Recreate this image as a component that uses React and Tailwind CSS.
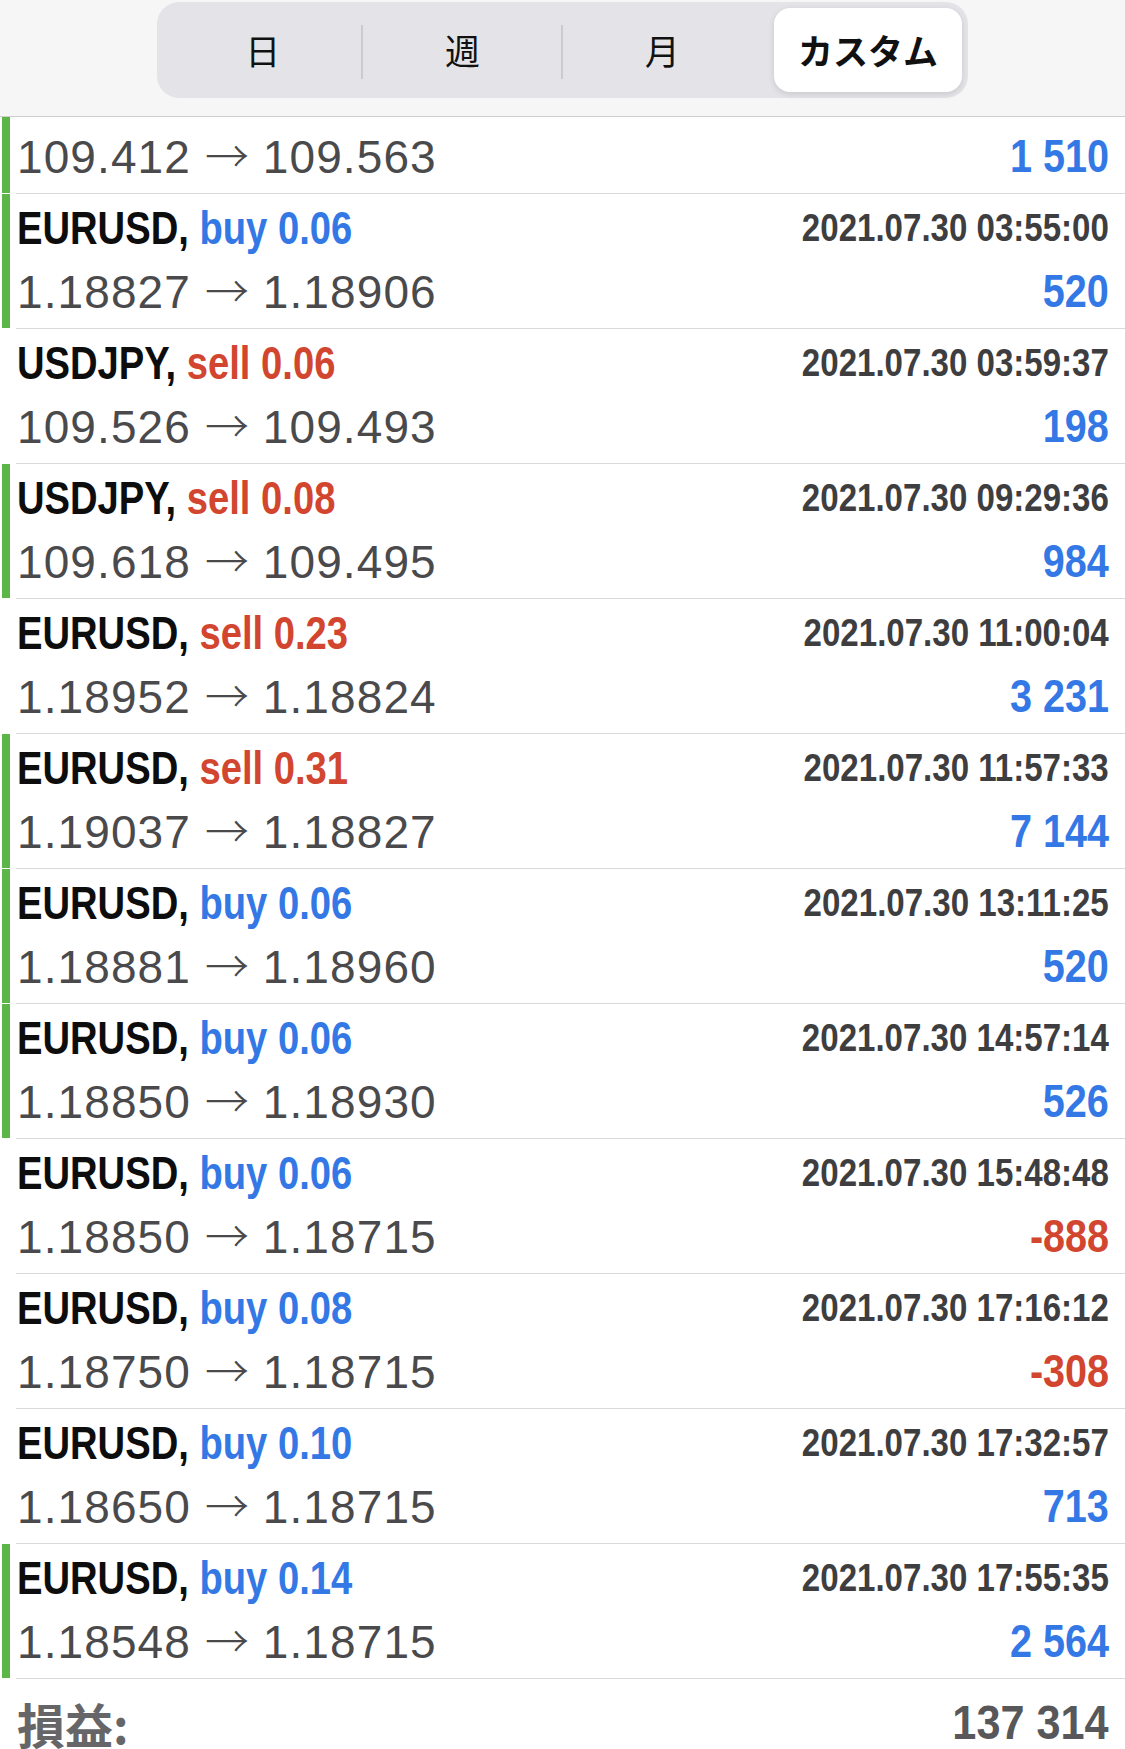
import React from 'react';

const trades = [
    { sym: 'EURUSD', side: 'buy', vol: '0.06', time: '2021.07.30 03:55:00', open: '1.18827', close: '1.18906', profit: '520', green: true },
    { sym: 'USDJPY', side: 'sell', vol: '0.06', time: '2021.07.30 03:59:37', open: '109.526', close: '109.493', profit: '198', green: false },
    { sym: 'USDJPY', side: 'sell', vol: '0.08', time: '2021.07.30 09:29:36', open: '109.618', close: '109.495', profit: '984', green: true },
    { sym: 'EURUSD', side: 'sell', vol: '0.23', time: '2021.07.30 11:00:04', open: '1.18952', close: '1.18824', profit: '3 231', green: false },
    { sym: 'EURUSD', side: 'sell', vol: '0.31', time: '2021.07.30 11:57:33', open: '1.19037', close: '1.18827', profit: '7 144', green: true },
    { sym: 'EURUSD', side: 'buy', vol: '0.06', time: '2021.07.30 13:11:25', open: '1.18881', close: '1.18960', profit: '520', green: true },
    { sym: 'EURUSD', side: 'buy', vol: '0.06', time: '2021.07.30 14:57:14', open: '1.18850', close: '1.18930', profit: '526', green: true },
    { sym: 'EURUSD', side: 'buy', vol: '0.06', time: '2021.07.30 15:48:48', open: '1.18850', close: '1.18715', profit: '-888', green: false },
    { sym: 'EURUSD', side: 'buy', vol: '0.08', time: '2021.07.30 17:16:12', open: '1.18750', close: '1.18715', profit: '-308', green: false },
    { sym: 'EURUSD', side: 'buy', vol: '0.10', time: '2021.07.30 17:32:57', open: '1.18650', close: '1.18715', profit: '713', green: false },
    { sym: 'EURUSD', side: 'buy', vol: '0.14', time: '2021.07.30 17:55:35', open: '1.18548', close: '1.18715', profit: '2 564', green: true },
];

const tabs = ['日', '週', '月', 'カスタム'];

// condensed bold look: Arial-width bold squeezed horizontally
const cond = "font-['Liberation_Sans',Arial,sans-serif] font-bold inline-block whitespace-nowrap";

const PriceLine = ({ open, close, profit }) => (
    <div className="h-[58px] flex items-center justify-between">
        <span className="font-['Liberation_Sans',Arial,sans-serif] text-[46px] tracking-[1.1px] text-[#4a4a4c] whitespace-nowrap">
            {open}{' '}
            <span className="font-['Noto_Sans_CJK_JP',sans-serif] font-light text-[44px] tracking-normal">→</span>
            {' '}{close}
        </span>
        <span className={`${cond} origin-right scale-x-[0.86] text-[46px] ${profit.startsWith('-') ? 'text-[#d2452f]' : 'text-[#3478e5]'}`}>
            {profit}
        </span>
    </div>
);

const Row = ({ green, children, partial }) => (
    <div className="flex">
        <div className="w-[16px] shrink-0 flex pb-[1px]">
            {green && <div className="ml-[2px] w-[8px] bg-[#5bb548]"></div>}
        </div>
        <div className={`flex-1 border-b border-[#d9d9db] pl-[1px] pr-[16px] ${partial ? 'h-[77px] pt-[10px]' : 'h-[135px] pt-[5px]'}`}>
            {children}
        </div>
    </div>
);

const App = () => {
    return (
        <div className="w-[1125px] h-[1749px] overflow-hidden bg-white">
            {/* Segmented header */}
            <div className="h-[117px] bg-[#f6f6f7] border-b border-[#cfcfd2] pt-[2px] flex justify-center">
                <div className="w-[811px] h-[96px] rounded-[22px] bg-[#e4e4e8] p-[6px] grid grid-cols-4 font-['Noto_Sans_CJK_JP',sans-serif] text-[35px] text-[#111]">
                    {tabs.map((t, i) => (
                        <div key={t} className="relative flex items-center justify-center">
                            {i === 3 ? (
                                <div className="ml-[12px] w-full h-full rounded-[16px] bg-white shadow-[0_2px_6px_rgba(0,0,0,0.12)] flex items-center justify-center font-semibold">
                                    {t}
                                </div>
                            ) : (
                                <span>{t}</span>
                            )}
                            {i < 2 && <div className="absolute right-0 top-[17px] h-[54px] w-[2px] bg-[#cbcbcf]"></div>}
                        </div>
                    ))}
                </div>
            </div>

            {/* Trade rows */}
            <Row green partial>
                <PriceLine open="109.412" close="109.563" profit="1 510" />
            </Row>
            {trades.map((t, i) => (
                <Row key={i} green={t.green}>
                    <div className="h-[58px] flex items-center justify-between">
                        <span className={`${cond} origin-left scale-x-[0.83] text-[46px] text-[#0d0d0d]`}>
                            {t.sym},{' '}
                            <span className={t.side === 'buy' ? 'text-[#3478e5]' : 'text-[#d2452f]'}>{t.side} {t.vol}</span>
                        </span>
                        <span className={`${cond} origin-right scale-x-[0.87] text-[38px] text-[#3e3e40]`}>{t.time}</span>
                    </div>
                    <div className="mt-[5px]">
                        <PriceLine open={t.open} close={t.close} profit={t.profit} />
                    </div>
                </Row>
            ))}

            {/* Footer total */}
            <div className="flex items-start justify-between pl-[17px] pr-[16px] pt-[14px] bg-white">
                <span className="font-['Noto_Sans_CJK_JP',sans-serif] font-bold text-[48px] leading-[60px] text-[#666668]">損益:</span>
                <span className={`${cond} origin-right scale-x-[0.9] text-[48px] leading-[60px] text-[#58585a]`}>137 314</span>
            </div>
        </div>
    );
};

export default App;
